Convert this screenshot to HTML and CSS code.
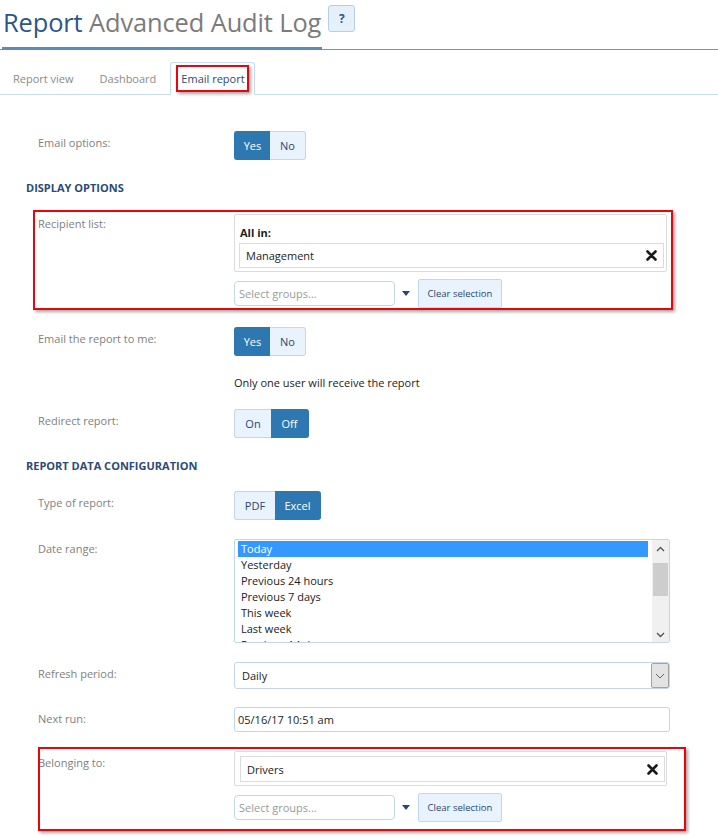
FILE: index.html
```html
<!DOCTYPE html>
<html lang="en">
<head>
<meta charset="utf-8">
<title>Report Advanced Audit Log</title>
<link rel="stylesheet" href="styles.css">
</head>
<body>
<div class="page">
  <header class="title-bar">
    <h1 class="title"><span class="title-main">Report</span> <span class="title-sub">Advanced Audit Log</span></h1>
    <button class="help" type="button">?</button>
  </header>

  <nav class="tabs">
    <a class="tab">Report view</a>
    <a class="tab">Dashboard</a>
    <a class="tab active"><span class="tab-text">Email report</span><span class="hl hl-tab"></span></a>
  </nav>

  <main class="form">
    <div class="row row-email">
      <div class="label lbl-toggle">Email options:</div>
      <div class="toggle"><span class="tbtn on">Yes</span><span class="tbtn">No</span></div>
    </div>

    <h2 class="section sec-display">DISPLAY OPTIONS</h2>

    <div class="row row-recipients">
      <div class="label lbl-top">Recipient list:</div>
      <div class="control">
        <div class="tagbox tagbox-all">
          <div class="tagbox-title">All in:</div>
          <div class="tag"><span>Management</span><svg class="tag-x" width="11" height="11" viewBox="0 0 11 11"><path d="M1.5 1.5 L9.5 9.5 M9.5 1.5 L1.5 9.5" stroke="#1a1a1a" stroke-width="2.6" stroke-linecap="round"/></svg></div>
        </div>
        <div class="picker">
          <div class="picker-input">Select groups...</div>
          <span class="caret"></span>
          <span class="clear-btn">Clear selection</span>
        </div>
      </div>
      <span class="hl hl-one"></span>
    </div>

    <div class="row row-tome">
      <div class="label lbl-toggle">Email the report to me:</div>
      <div class="toggle"><span class="tbtn on">Yes</span><span class="tbtn">No</span></div>
    </div>

    <div class="row row-note">
      <div></div>
      <div class="note">Only one user will receive the report</div>
    </div>

    <div class="row row-redirect">
      <div class="label lbl-toggle">Redirect report:</div>
      <div class="toggle"><span class="tbtn tbtn-on">On</span><span class="tbtn tbtn-off on">Off</span></div>
    </div>

    <h2 class="section sec-data">REPORT DATA CONFIGURATION</h2>

    <div class="row row-type">
      <div class="label lbl-toggle">Type of report:</div>
      <div class="toggle"><span class="tbtn tbtn-pdf">PDF</span><span class="tbtn tbtn-excel on">Excel</span></div>
    </div>

    <div class="row row-range">
      <div class="label lbl-top">Date range:</div>
      <div class="listbox">
        <ul class="list">
          <li class="sel">Today</li>
          <li>Yesterday</li>
          <li>Previous 24 hours</li>
          <li>Previous 7 days</li>
          <li>This week</li>
          <li>Last week</li>
          <li>Previous 14 days</li>
        </ul>
        <div class="scrollbar">
          <svg class="sb-arrow" width="9" height="6" viewBox="0 0 9 6"><path d="M1 5 L4.5 1.5 L8 5" fill="none" stroke="#555" stroke-width="1.4"/></svg>
          <div class="sb-track"><div class="sb-thumb"></div></div>
          <svg class="sb-arrow" width="9" height="6" viewBox="0 0 9 6"><path d="M1 1 L4.5 4.5 L8 1" fill="none" stroke="#555" stroke-width="1.4"/></svg>
        </div>
      </div>
    </div>

    <div class="row row-refresh">
      <div class="label lbl-field">Refresh period:</div>
      <div class="select">
        <span class="select-value">Daily</span>
        <span class="select-arrow"><svg width="10" height="6" viewBox="0 0 10 6"><path d="M1 1 L5 5 L9 1" fill="none" stroke="#666" stroke-width="1"/></svg></span>
      </div>
    </div>

    <div class="row row-next">
      <div class="label lbl-field">Next run:</div>
      <div class="input">05/16/17 10:51 am</div>
    </div>

    <div class="row row-belong">
      <div class="label lbl-field">Belonging to:</div>
      <div class="control">
        <div class="tagbox tagbox-drivers">
          <div class="tag"><span>Drivers</span><svg class="tag-x" width="11" height="11" viewBox="0 0 11 11"><path d="M1.5 1.5 L9.5 9.5 M9.5 1.5 L1.5 9.5" stroke="#1a1a1a" stroke-width="2.6" stroke-linecap="round"/></svg></div>
        </div>
        <div class="picker">
          <div class="picker-input">Select groups...</div>
          <span class="caret"></span>
          <span class="clear-btn">Clear selection</span>
        </div>
      </div>
      <span class="hl hl-two"></span>
    </div>
  </main>
</div>
</body>
</html>
```

FILE: styles.css
```css
* { box-sizing: border-box; }

html, body {
  margin: 0;
  padding: 0;
  background: #ffffff;
}

body {
  font-family: "Open Sans", "Noto Sans", "Liberation Sans", sans-serif;
  font-size: 11px;
  color: #222;
}

.page {
  width: 718px;
}

/* ---------- title ---------- */
.title-bar {
  display: flex;
  align-items: flex-start;
  border-bottom: 1px solid #6a98c0;
  height: 50px;
}

.title {
  margin: 0 0 -1px 2px;
  padding: 0 1px;
  height: 50px;
  border-bottom: 3px solid #5b8cb8;
  font-weight: normal;
  font-size: 25.4px;
  line-height: 44px;
  letter-spacing: -0.1px;
  white-space: nowrap;
}

.title-main { color: #2c5687; }
.title-sub { color: #7b7b7b; }

.help {
  margin: 5px 0 0 6px;
  width: 27px;
  height: 27px;
  padding: 0;
  border: 1px solid #b6cfe6;
  border-radius: 3px;
  background: #e6f0fa;
  color: #2c5687;
  font-family: inherit;
  font-weight: bold;
  font-size: 12px;
}

/* ---------- tabs ---------- */
.tabs {
  display: flex;
  align-items: flex-end;
  margin-top: 12px;
  height: 33px;
  border-bottom: 1px solid #c6dcef;
}

.tab {
  display: flex;
  align-items: center;
  height: 33px;
  padding: 0 13px 1px 13px;
  color: #8a8a8a;
  font-size: 11px;
  margin-bottom: -1px;
  position: relative;
}

.tab.active {
  margin-left: 1px;
  padding: 0 9px 1px 10px;
  border: 1px solid #c6dcef;
  border-bottom: 1px solid #ffffff;
  border-radius: 3px 3px 0 0;
  background: #fff;
  color: #2b4a78;
}

.hl {
  position: absolute;
  border: 2px solid #e8050c;
  box-shadow: 2px 2px 3px rgba(0, 0, 0, 0.35);
  pointer-events: none;
}

.hl-tab { left: 5px; top: 2px; right: 5px; bottom: 2px; }

/* ---------- form ---------- */
.form {
  padding-bottom: 20px;
}

.row {
  position: relative;
  display: grid;
  grid-template-columns: 196px 436px;
  margin-left: 38px;
  width: 632px;
}

.label {
  color: #808080;
  font-size: 11px;
  line-height: 16px;
}

.lbl-toggle { padding-top: 4px; }
.lbl-top { padding-top: 2px; }
.lbl-field { padding-top: 4px; }

.section {
  margin: 0 0 0 26px;
  font-size: 11px;
  line-height: 16px;
  font-weight: bold;
  color: #2b4a78;
}

.row-email { margin-top: 36px; }
.sec-display { margin-top: 20px; }
.row-recipients { margin-top: 18px; }
.row-tome { margin-top: 19px; }
.row-note { margin-top: 19px; }
.row-redirect { margin-top: 18px; }
.sec-data { margin-top: 20px; }
.row-type { margin-top: 17px; }
.row-range { margin-top: 19px; }
.row-refresh { margin-top: 19px; }
.row-next { margin-top: 18px; }
.row-belong { margin-top: 19px; }

/* ---------- toggles ---------- */
.toggle {
  display: flex;
  height: 29px;
}

.tbtn {
  display: flex;
  align-items: center;
  justify-content: center;
  width: 36px;
  height: 29px;
  background: #e9f3fd;
  border: 1px solid #c3d7ea;
  color: #2b4670;
  font-size: 11px;
}

.tbtn:first-child { border-radius: 3px 0 0 3px; border-right: none; }
.tbtn:last-child { border-radius: 0 3px 3px 0; border-left: none; }

.tbtn.on {
  background: #2e78b1;
  border-color: #2e78b1;
  color: #ffffff;
}

.tbtn-on { width: 37px; }
.tbtn-off { width: 38px; }
.tbtn-pdf { width: 41px; }
.tbtn-excel { width: 46px; }

.note {
  line-height: 16px;
  color: #222;
  font-size: 11px;
}

/* ---------- tag boxes ---------- */
.control {
  display: flex;
  flex-direction: column;
}

.tagbox {
  width: 433px;
  border: 1px solid #dcdcdc;
  border-radius: 2px;
}

.tagbox-all { padding: 9px 2px 3px 4px; }
.tagbox-drivers { padding: 4px 1px 3px 5px; }

.tagbox-title {
  font-weight: bold;
  line-height: 18px;
  margin-bottom: 1px;
  padding-left: 1px;
  color: #222;
}

.tag {
  display: flex;
  align-items: center;
  justify-content: space-between;
  height: 25px;
  border: 1px solid #dcdcdc;
  padding: 0 6px 0 6px;
  color: #222;
  font-size: 11px;
}

.tagbox-drivers .tag { height: 26px; }

.tag-x { flex: none; }

.picker {
  display: flex;
  align-items: center;
  margin-top: 7px;
  height: 29px;
}

.picker-input {
  width: 161px;
  height: 25px;
  border: 1px solid #c3d7ea;
  border-radius: 4px;
  padding: 0 4px;
  line-height: 23px;
  color: #9a9a9a;
  font-size: 11px;
}

.caret {
  width: 0;
  height: 0;
  margin: 0 8px 0 7px;
  border-left: 4.5px solid transparent;
  border-right: 4.5px solid transparent;
  border-top: 5px solid #2b4670;
}

.clear-btn {
  display: flex;
  align-items: center;
  justify-content: center;
  width: 84px;
  height: 29px;
  background: #e9f3fd;
  border: 1px solid #c3d7ea;
  border-radius: 2px;
  color: #2b4670;
  font-size: 9.5px;
}

.hl-one { left: -5px; top: -4px; right: -3px; bottom: -2px; }
.hl-two { left: 0; top: -4px; right: -16px; bottom: -9px; }

/* ---------- listbox ---------- */
.listbox {
  display: flex;
  height: 104px;
  border: 1px solid #c3d7ea;
  border-radius: 2px;
  overflow: hidden;
}

.list {
  flex: 1;
  margin: 0;
  padding: 1px 4px 0 3px;
  list-style: none;
  overflow: hidden;
}

.list li {
  height: 16px;
  line-height: 16px;
  padding-left: 3px;
  font-size: 11px;
  color: #222;
  white-space: nowrap;
}

.list li.sel {
  background: #3399ff;
  color: #ffffff;
}

.scrollbar {
  width: 17px;
  display: flex;
  flex-direction: column;
  align-items: center;
  background: #f0f0f0;
  padding: 6px 0 4px;
}

.sb-arrow { flex: none; }

.sb-track {
  flex: 1;
  width: 100%;
  padding-top: 11px;
}

.sb-thumb {
  height: 33px;
  margin: 0 0 0 1px;
  width: 15px;
  background: #cdcdcd;
}

/* ---------- select / input ---------- */
.select {
  display: flex;
  align-items: center;
  justify-content: space-between;
  height: 27px;
  border: 1px solid #c3d7ea;
  border-radius: 3px;
  padding: 0 0 0 7px;
}

.select-value {
  color: #222;
  font-size: 11px;
}

.select-arrow {
  display: flex;
  align-items: center;
  justify-content: center;
  width: 18px;
  height: 25px;
  margin-right: 0;
  background: #e3e3e3;
  border: 1px solid #a3a3a3;
  border-radius: 2px;
}

.input {
  height: 25px;
  border: 1px solid #c3d7ea;
  border-radius: 3px;
  padding: 0 3px;
  line-height: 23px;
  color: #222;
  font-size: 11px;
}
```
